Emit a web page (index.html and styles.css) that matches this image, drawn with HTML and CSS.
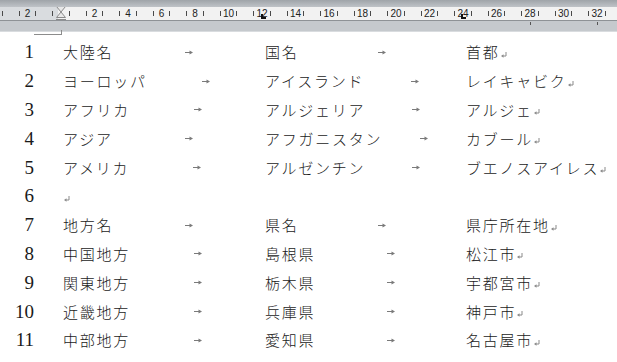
FILE: index.html
```html
<!DOCTYPE html>
<html lang="ja">
<head>
<meta charset="utf-8">
<link rel="stylesheet" href="styles.css">
</head>
<body>
<div class="ruler">
  <div class="ruler-top"></div>
  <div class="ruler-track">
    <div class="ruler-left"></div>
    <div class="ruler-scale" id="scale"></div>
    <svg class="indent-marker" width="11" height="21" viewBox="0 0 11 21">
      <path d="M0.5 0.5H9.5L5 6L9.5 11.5H0.5L5 6Z" fill="#e8e8e8" stroke="#8a8a8a"/>
      <rect x="0.5" y="13.5" width="9" height="6" fill="#d4d4d4" stroke="#8a8a8a"/>
    </svg>
    <span class="tab-stop t12"></span>
    <span class="tab-stop t24"></span>
  </div>
  <div class="ruler-bottom">
    <span class="dtab d28"></span>
    <span class="dtab d32"></span>
  </div>
</div>
<div class="page">
  <div class="corner"></div>
  <div class="rows" id="rows"></div>
</div>
<script src="app.js"></script>
</body>
</html>
```
FILE: styles.css
```css
html, body {
  margin: 0;
  padding: 0;
  background: #ffffff;
  width: 617px;
  height: 362px;
  overflow: hidden;
}
.ruler {
  position: relative;
  height: 32px;
  display: flex;
  flex-direction: column;
}
.ruler-top {
  height: 7px;
  background: linear-gradient(#9fa4a9, #bfc3c7);
}
.ruler-track {
  position: relative;
  height: 13px;
  background: #f2f2f2;
  border-bottom: 1px solid #8e9296;
  overflow: hidden;
}
.ruler-left {
  position: absolute;
  left: 0;
  top: 0;
  width: 58px;
  height: 13px;
  background: #d9dcdf;
}
.ruler-scale {
  position: relative;
  display: flex;
  margin-left: -22.75px;
  height: 13px;
}
.cell {
  flex: 0 0 33.5px;
  display: flex;
  align-items: center;
  justify-content: center;
  position: relative;
}
.tick {
  width: 1px;
  height: 5px;
  background: #4a4a4a;
}
.num {
  width: 15.5px;
  text-align: center;
  font-family: "Liberation Sans", Arial, sans-serif;
  font-size: 10px;
  line-height: 13px;
  color: #222;
}
.indent-marker {
  position: absolute;
  left: 56px;
  top: -1px;
}
.ruler-bottom {
  position: relative;
  height: 10px;
  background: #c5c9cd;
  border-bottom: 1px solid #d9dcdf;
}
.tab-stop {
  position: absolute;
  top: 7px;
  width: 5px;
  height: 5px;
  border-left: 2px solid #111;
  border-bottom: 2px solid #111;
  box-sizing: border-box;
}
.t12 { left: 261px; }
.t24 { left: 461px; }
.dtab {
  position: absolute;
  top: 1px;
  width: 1px;
  height: 3px;
  background: #555;
}
.d28 { left: 530px; }
.d32 { left: 597px; }
.page {
  position: relative;
  padding-top: 6px;
}
.corner {
  position: absolute;
  left: 34px;
  top: -2px;
  width: 27px;
  height: 4px;
  border-right: 1px solid #8c8c8c;
  border-bottom: 1px solid #8c8c8c;
}
.rows {
  display: flex;
  flex-direction: column;
}
.row {
  display: grid;
  grid-template-columns: 63px 202px 201px 1fr;
  height: 28.8px;
  align-items: center;
}
.ln {
  font-family: "Liberation Serif", "Times New Roman", serif;
  font-size: 19px;
  color: #1a1a1a;
  text-align: right;
  padding-right: 29px;
  line-height: 28px;
}
.cell-t {
  display: flex;
  align-items: center;
  height: 28px;
  white-space: nowrap;
}
.txt {
  font-family: "Noto Sans CJK JP", "Noto Sans CJK SC", sans-serif;
  font-size: 15px;
  font-weight: 300;
  letter-spacing: 1.75px;
  color: #1a1a1a;
  line-height: 28px;
}
.tab {
  flex: 1;
  display: flex;
  justify-content: center;
  align-items: center;
}
.ret {
  margin-left: 1px;
  margin-top: 5px;
}
```
FILE: app.js
```js
(function () {
  var scale = document.getElementById('scale');
  for (var k = -2; k <= 16; k++) {
    var c = document.createElement('div');
    c.className = 'cell';
    var t1 = document.createElement('span'); t1.className = 'tick';
    var n = document.createElement('span'); n.className = 'num';
    n.textContent = (k === 0 || k === -2) ? '' : String(Math.abs(2 * k));
    var t2 = document.createElement('span'); t2.className = 'tick';
    c.appendChild(t1); c.appendChild(n); c.appendChild(t2);
    scale.appendChild(c);
  }
  var arrow = '<svg width="8" height="5" viewBox="0 0 8 5"><path d="M0 2.5H5.5" stroke="#7a7a7a" stroke-width="1"/><path d="M4.5 0.5L8 2.5L4.5 4.5Z" fill="#7a7a7a"/></svg>';
  var ret = '<svg class="ret" width="6" height="6" viewBox="0 0 6 6"><path d="M5 0V4H1.5" stroke="#8a8a8a" stroke-width="1" fill="none"/><path d="M2.5 2.2L0 4L2.5 5.8Z" fill="#8a8a8a"/></svg>';
  var data = [
    ['大陸名', '国名', '首都'],
    ['ヨーロッパ', 'アイスランド', 'レイキャビク'],
    ['アフリカ', 'アルジェリア', 'アルジェ'],
    ['アジア', 'アフガニスタン', 'カブール'],
    ['アメリカ', 'アルゼンチン', 'ブエノスアイレス'],
    null,
    ['地方名', '県名', '県庁所在地'],
    ['中国地方', '島根県', '松江市'],
    ['関東地方', '栃木県', '宇都宮市'],
    ['近畿地方', '兵庫県', '神戸市'],
    ['中部地方', '愛知県', '名古屋市']
  ];
  var rows = document.getElementById('rows');
  var html = '';
  data.forEach(function (r, i) {
    html += '<div class="row"><div class="ln">' + (i + 1) + '</div>';
    if (!r) {
      html += '<div class="cell-t">' + ret + '</div>';
    } else {
      html += '<div class="cell-t"><span class="txt">' + r[0] + '</span><span class="tab">' + arrow + '</span></div>';
      html += '<div class="cell-t"><span class="txt">' + r[1] + '</span><span class="tab">' + arrow + '</span></div>';
      html += '<div class="cell-t"><span class="txt">' + r[2] + '</span>' + ret + '</div>';
    }
    html += '</div>';
  });
  rows.innerHTML = html;
})();
```
